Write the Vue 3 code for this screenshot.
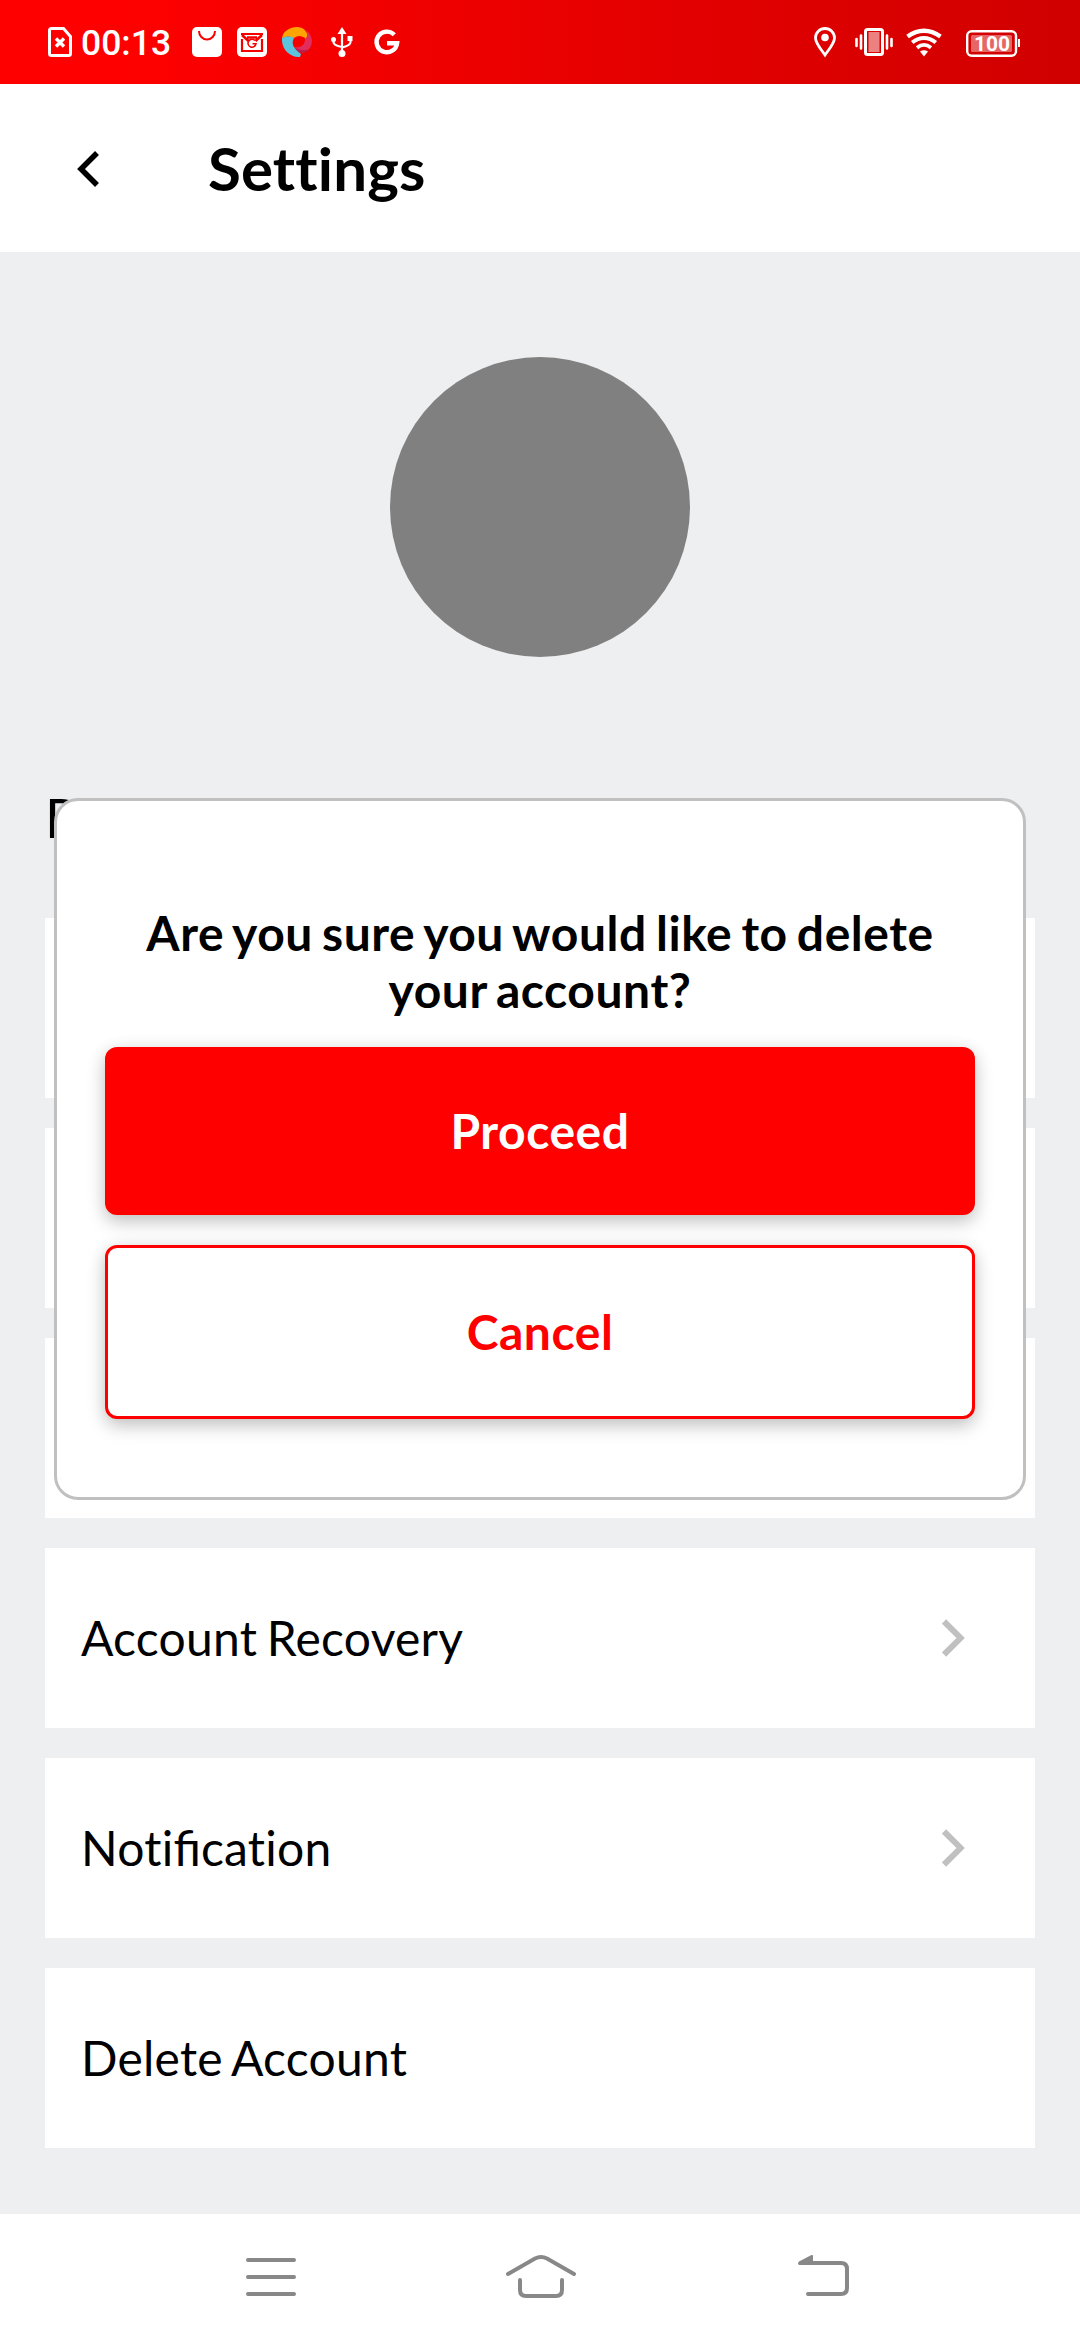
<script setup>
// Labels are split so that only the "fi" pair is joined into a ligature.
const items = [
  { parts: [], arrow: true },
  { parts: [], arrow: true },
  { parts: [], arrow: true },
  { parts: ['Account Recovery'], arrow: true },
  { parts: ['Noti', 'fi', 'cation'], arrow: true },
  { parts: ['Delete Account'], arrow: false },
]
</script>

<template>
  <div class="screen">
    <div class="status">
      <div class="group">
        <svg width="30" height="84" viewBox="45 0 30 84">
          <path d="M51.5 28.5H63.5L70.5 36.5V53.5Q70.5 55.5 68.5 55.5H51.5Q49.5 55.5 49.5 53.5V30.5Q49.5 28.5 51.5 28.5Z" fill="none" stroke="#fff" stroke-width="3" />
          <path d="M56 38.5L64 46.5M64 38.5L56 46.5" stroke="#fff" stroke-width="3.4" />
        </svg>
        <span class="time">00:13</span>
        <svg width="30" height="84" viewBox="192 0 30 84">
          <rect x="192" y="27" width="30" height="30" rx="5" fill="#fff" />
          <path d="M199 31A8 8.5 0 0 0 215 31" fill="none" stroke="#f80000" stroke-width="2" />
        </svg>
        <svg width="30" height="84" viewBox="237 0 30 84">
          <rect x="237" y="27" width="30" height="30" rx="5" fill="#fff" />
          <path d="M242 39V51H262V39" fill="none" stroke="#f40000" stroke-width="2.2" />
          <path d="M241 34H263" stroke="#f40000" stroke-width="2" />
          <path d="M242 35L248.5 41M262 35L255.5 41M247 37.5H257" fill="none" stroke="#f40000" stroke-width="2.6" />
          <path d="M255 40.5A4 4 0 1 0 256 43.7H252.5" fill="none" stroke="#f40000" stroke-width="1.6" />
        </svg>
        <svg width="30" height="84" viewBox="282 0 30 84">
          <path d="M282 38C283 31 290 27 297 27C303 27 309 31 308 42C305 36 299 34 294 38C290 36 286 36 282 38Z" fill="#ffa400" />
          <path d="M306 30C313 35 314 45 308 50C302 55 295 51 293.5 47C300 48 305 46 305 39C307.5 37 308 33 306 30Z" fill="#e22d5c" />
          <path d="M293.5 47C298 50 304 51 309 49.5C304 55 296 53 293.5 47Z" fill="#b81d4b" />
          <path d="M282 38C286 36 291 36 294 38C291 43 293 48 301 54L300 57C290 58 281 49 282 38Z" fill="#5bc4dc" />
        </svg>
        <svg class="usb" width="24" height="84" viewBox="330 0 24 84">
          <path d="M342 53V32M333.5 39V42Q333.5 45.5 342 47M350.5 39V42Q350.5 45.5 342 47.5" fill="none" stroke="#fff" stroke-width="2.2" />
          <path d="M342 27L346.5 34H337.5Z" fill="#fff" />
          <circle cx="342" cy="53.5" r="3.5" fill="#fff" />
          <circle cx="333.5" cy="39.5" r="2.5" fill="#fff" />
          <rect x="347.5" y="36" width="5" height="5" fill="#fff" />
        </svg>
        <svg class="goog" width="28" height="84" viewBox="373 0 28 84">
          <path d="M394.3 34.8A10.3 10.3 0 1 0 397.1 43.2H387" fill="none" stroke="#fff" stroke-width="4.4" />
        </svg>
      </div>
      <div class="group">
        <svg width="24" height="84" viewBox="813 0 24 84">
          <path d="M825 55C822 50.5 815.5 43.5 815.5 38A9.5 9.5 0 0 1 834.5 38C834.5 43.5 828 50.5 825 55Z" fill="none" stroke="#fff" stroke-width="2.8" />
          <circle cx="825" cy="37.5" r="3.8" fill="#fff" />
        </svg>
        <svg class="vib" width="40" height="84" viewBox="854 0 40 84">
          <rect x="865.5" y="29.5" width="17" height="25" rx="2" fill="none" stroke="#fff" stroke-width="3" />
          <rect x="868.5" y="32" width="11" height="20" fill="#fff" fill-opacity=".5" />
          <path d="M861 35.5V48.5M887 35.5V48.5M856.5 39V46M891.5 39V46" stroke="#fff" stroke-width="2.6" stroke-linecap="round" />
        </svg>
        <svg class="wifi" width="38" height="84" viewBox="905 0 38 84">
          <g fill="none" stroke="#fff">
            <path d="M907.5 36.5Q924 25 940.5 36.5" stroke-width="4.4" />
            <path d="M912.2 42.5Q924 33.5 935.8 42.5" stroke-width="4" />
            <path d="M917 47.7Q924 42 931 47.7" stroke-width="3.8" />
          </g>
          <path d="M920 51.5Q924 49.2 928 51.5L924 56.5Z" fill="#fff" />
        </svg>
        <svg class="bat" width="56" height="84" viewBox="965 0 56 84">
          <rect x="967.2" y="31.2" width="48.8" height="24.6" rx="4.5" fill="none" stroke="#fff" stroke-width="2.4" />
          <rect x="971" y="35" width="41" height="17" rx="1.5" fill="#fff" fill-opacity=".4" />
          <path d="M1019 39V47" stroke="#fff" stroke-width="2" />
          <text x="992" y="50.8" text-anchor="middle" class="pct">100</text>
        </svg>
      </div>
    </div>

    <header class="bar">
      <svg width="24" height="38" viewBox="77 149 24 38">
        <path d="M97 153L81 169L97 185" fill="none" stroke="#000" stroke-width="5.5" />
      </svg>
      <h1>Settings</h1>
    </header>

    <main class="content">
      <div class="avatar"></div>
      <h2>Profile</h2>
      <div class="list">
        <div v-for="(item, i) in items" :key="i" class="item">
          <span><span v-for="part in item.parts" :key="part" :class="{ joined: part === 'fi' }">{{ part }}</span></span>
          <svg v-if="item.arrow" width="24" height="38" viewBox="0 0 24 38">
            <path d="M2 2.4L18.6 19L2 35.6" fill="none" stroke="#c0c0c0" stroke-width="6" />
          </svg>
        </div>
      </div>
    </main>

    <nav class="nav">
      <svg width="50" height="50" viewBox="246 2251 50 50">
        <path d="M248 2260H294M248 2277H294M248 2294H294" stroke="#888" stroke-width="4" stroke-linecap="round" />
      </svg>
      <svg class="home" width="72" height="50" viewBox="505 2251 72 50">
        <g fill="none" stroke="#888" stroke-width="4" stroke-linecap="round">
          <path d="M508 2274L535 2258.5Q541 2255.5 547 2258.5L574 2274" />
          <path d="M520 2280V2290Q520 2296 526 2296H556Q562 2296 562 2290V2280" />
        </g>
      </svg>
      <svg width="54" height="50" viewBox="797 2251 54 50">
        <path d="M808 2294H841Q847 2294 847 2288V2269Q847 2263 841 2263H803" fill="none" stroke="#888" stroke-width="4" stroke-linecap="round" />
        <path d="M799 2265Q797 2263.5 799 2261.5L811.5 2255Q813 2254.5 813 2256V2265Z" fill="#888" />
      </svg>
    </nav>

    <div class="dialog">
      <p>Are you sure you would like to delete your account?</p>
      <button class="btn proceed">Proceed</button>
      <button class="btn cancel">Cancel</button>
    </div>
  </div>
</template>

<style>
body {
  margin: 0;
  background: #eeeff1;
}
</style>

<style scoped>
.screen {
  position: relative;
  width: 1080px;
  height: 2340px;
  display: flex;
  flex-direction: column;
  overflow: hidden;
  background: #eeeff1;
  color: #000;
  font-family: Lato, sans-serif;
}
svg {
  display: block;
  flex: none;
}
.status {
  height: 84px;
  flex: none;
  box-sizing: border-box;
  padding: 0 59px 0 45px;
  display: flex;
  justify-content: space-between;
  background: linear-gradient(90deg, #ff0000 10%, #d00000);
}
.group {
  display: flex;
  align-items: center;
  gap: 15px;
}
.time {
  width: 102px;
  box-sizing: border-box;
  margin: 2px 0 0 -15px;
  padding-left: 6px;
  font: 500 35.5px/42px Roboto, sans-serif;
  color: #fff;
  white-space: nowrap;
}
.usb {
  margin-left: 3px;
}
.goog {
  margin-left: 4px;
}
.vib {
  margin-left: 2px;
}
.wifi {
  margin-left: -4px;
}
.bat {
  margin-left: 7px;
}
.pct {
  font: 700 21px Roboto, sans-serif;
  fill: #fff;
}
.bar {
  height: 168px;
  flex: none;
  box-sizing: border-box;
  padding-left: 77px;
  display: flex;
  align-items: center;
  gap: 107px;
  background: #fff;
}
h1 {
  margin: 0;
  font-size: 60px;
  line-height: 72px;
  font-weight: 700;
  letter-spacing: 0.15px;
}
.content {
  flex: 1;
  display: flex;
  flex-direction: column;
  padding: 105px 45px 0;
}
.avatar {
  width: 300px;
  height: 300px;
  border-radius: 50%;
  background: #808080;
  align-self: center;
}
h2 {
  margin: 128px 0 68px;
  font-size: 54px;
  line-height: 65px;
  font-weight: 400;
}
.list {
  display: flex;
  flex-direction: column;
  gap: 30px;
}
.item {
  height: 180px;
  box-sizing: border-box;
  padding: 0 69px 0 36px;
  display: flex;
  align-items: center;
  justify-content: space-between;
  background: #fff;
  font-size: 48px;
  line-height: 58px;
  letter-spacing: 0.25px;
  word-spacing: -3px;
}
.joined {
  letter-spacing: 0;
}
.nav {
  height: 126px;
  flex: none;
  box-sizing: border-box;
  padding: 0 229px 2px 246px;
  display: flex;
  align-items: center;
  justify-content: space-between;
  background: #fff;
}
.home {
  margin-left: -11px;
}
.dialog {
  position: absolute;
  left: 54px;
  top: 798px;
  width: 972px;
  height: 702px;
  box-sizing: border-box;
  border: 3px solid #c0c0c0;
  border-radius: 24px;
  background: #fff;
  padding: 103px 48px 0;
  display: flex;
  flex-direction: column;
}
p {
  margin: 0 0 29px;
  padding: 0 30px;
  font-size: 48px;
  line-height: 57px;
  font-weight: 700;
  letter-spacing: 0.55px;
  word-spacing: -3.1px;
  text-align: center;
}
.btn {
  height: 168px;
  flex: none;
  box-sizing: border-box;
  border: 0;
  border-radius: 12px;
  font: 700 48px/58px Lato, sans-serif;
  letter-spacing: 0.55px;
  box-shadow: 0 7px 18px rgba(0, 0, 0, 0.22), 0 0 18px rgba(0, 0, 0, 0.05);
}
.proceed {
  background: #f00;
  color: #fff;
}
.cancel {
  height: 174px;
  margin-top: 30px;
  border: 3px solid #f00;
  background: #fff;
  color: #f00;
}
</style>
